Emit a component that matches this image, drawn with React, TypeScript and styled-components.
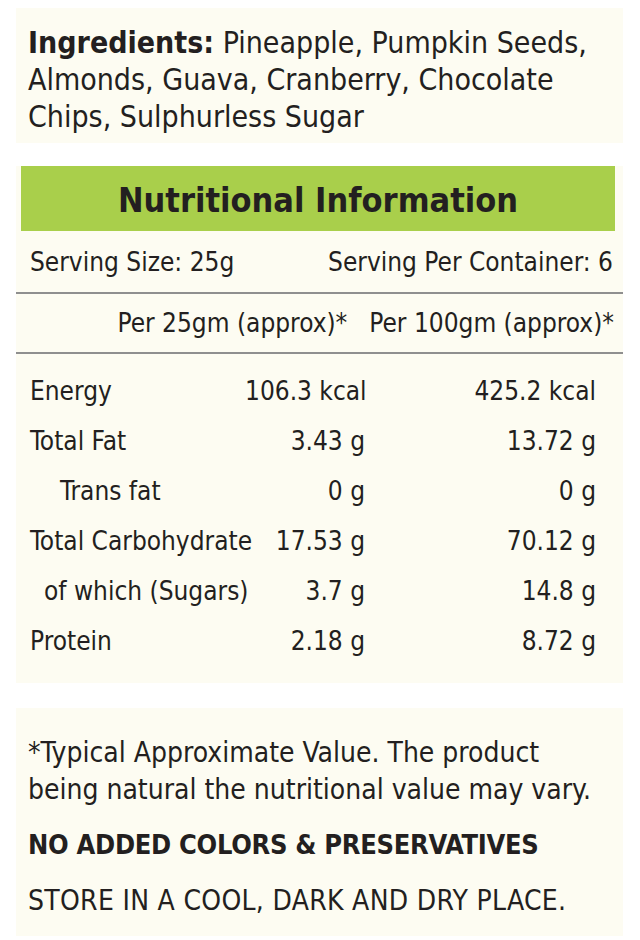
import { Fragment } from 'react';
import styled, { createGlobalStyle } from 'styled-components';

const GlobalStyle = createGlobalStyle`
  body {
    margin: 0;
    background: #ffffff;
    font-family: "Liberation Sans Narrow", "DejaVu Sans Condensed", "Liberation Sans", sans-serif;
    color: #231f20;
  }
`;

const Page = styled.div`
  width: 607px;
  padding: 8px 17px 4px 16px;
  display: flex;
  flex-direction: column;
`;

const Panel = styled.section`
  background: #fdfcf2;
`;

const Ingredients = styled(Panel)`
  height: 135px;
  box-sizing: border-box;
  padding: 16px 12px 0 12px;
  font-size: 30px;
  line-height: 37px;
`;

const Bold = styled.b`
  font-weight: 700;
`;

const Nutrition = styled(Panel)`
  margin-top: 23px;
  height: 517px;
`;

const TitleBar = styled.h2`
  margin: 0 8px 0 5px;
  height: 65px;
  background: #a9cf4b;
  display: flex;
  align-items: center;
  justify-content: center;
  font-size: 34px;
  font-weight: 700;
  padding-top: 2px;
  box-sizing: border-box;
`;

const ServingRow = styled.div`
  display: flex;
  justify-content: space-between;
  align-items: center;
  height: 61px;
  padding: 0 10px 0 14px;
  font-size: 26px;
  border-bottom: 2px solid #8f8f8f;
`;

const HeadRow = styled.div`
  display: flex;
  justify-content: flex-end;
  align-items: center;
  gap: 22px;
  height: 58px;
  padding-right: 9px;
  font-size: 26px;
  border-bottom: 2px solid #8f8f8f;
`;

const Grid = styled.div`
  display: grid;
  grid-template-columns: minmax(0, 1fr) 120px 231px;
  grid-auto-rows: 50px;
  padding: 12px 27px 0 14px;
  font-size: 26px;
  align-items: center;
`;

const Label = styled.div<{ $indent?: number }>`
  padding-left: ${p => p.$indent ?? 0}px;
  white-space: nowrap;
`;

const Value = styled.div`
  text-align: right;
  white-space: nowrap;
`;

const Footer = styled(Panel)`
  margin-top: 25px;
  height: 228px;
  box-sizing: border-box;
  padding: 26px 12px 0 12px;
  font-size: 28px;
`;

const Note = styled.p`
  margin: 0;
  line-height: 37px;
`;

const Warning = styled.p`
  margin: 18px 0 0;
  font-size: 27px;
  font-weight: 700;
  letter-spacing: -0.3px;
  line-height: 37px;
`;

const Storage = styled.p`
  margin: 19px 0 0;
  letter-spacing: 0.3px;
  line-height: 37px;
`;

const rows: [string, number, string, string][] = [
  ['Energy', 0, '106.3 kcal', '425.2 kcal'],
  ['Total Fat', 0, '3.43 g', '13.72 g'],
  ['Trans fat', 30, '0 g', '0 g'],
  ['Total Carbohydrate', 0, '17.53 g', '70.12 g'],
  ['of which (Sugars)', 14, '3.7 g', '14.8 g'],
  ['Protein', 0, '2.18 g', '8.72 g'],
];

export default function App() {
  return (
    <>
      <GlobalStyle />
      <Page>
        <Ingredients>
          <Bold>Ingredients:</Bold> Pineapple, Pumpkin Seeds, Almonds, Guava, Cranberry, Chocolate
          Chips, Sulphurless Sugar
        </Ingredients>
        <Nutrition>
          <TitleBar>Nutritional Information</TitleBar>
          <ServingRow>
            <span>Serving Size: 25g</span>
            <span>Serving Per Container: 6</span>
          </ServingRow>
          <HeadRow>
            <span>Per 25gm (approx)*</span>
            <span>Per 100gm (approx)*</span>
          </HeadRow>
          <Grid>
            {rows.map(([name, indent, a, b]) => (
              <Fragment key={name}>
                <Label $indent={indent}>{name}</Label>
                <Value>{a}</Value>
                <Value>{b}</Value>
              </Fragment>
            ))}
          </Grid>
        </Nutrition>
        <Footer>
          <Note>
            *Typical Approximate Value. The product being natural the nutritional value may vary.
          </Note>
          <Warning>NO ADDED COLORS &amp; PRESERVATIVES</Warning>
          <Storage>STORE IN A COOL, DARK AND DRY PLACE.</Storage>
        </Footer>
      </Page>
    </>
  );
}
